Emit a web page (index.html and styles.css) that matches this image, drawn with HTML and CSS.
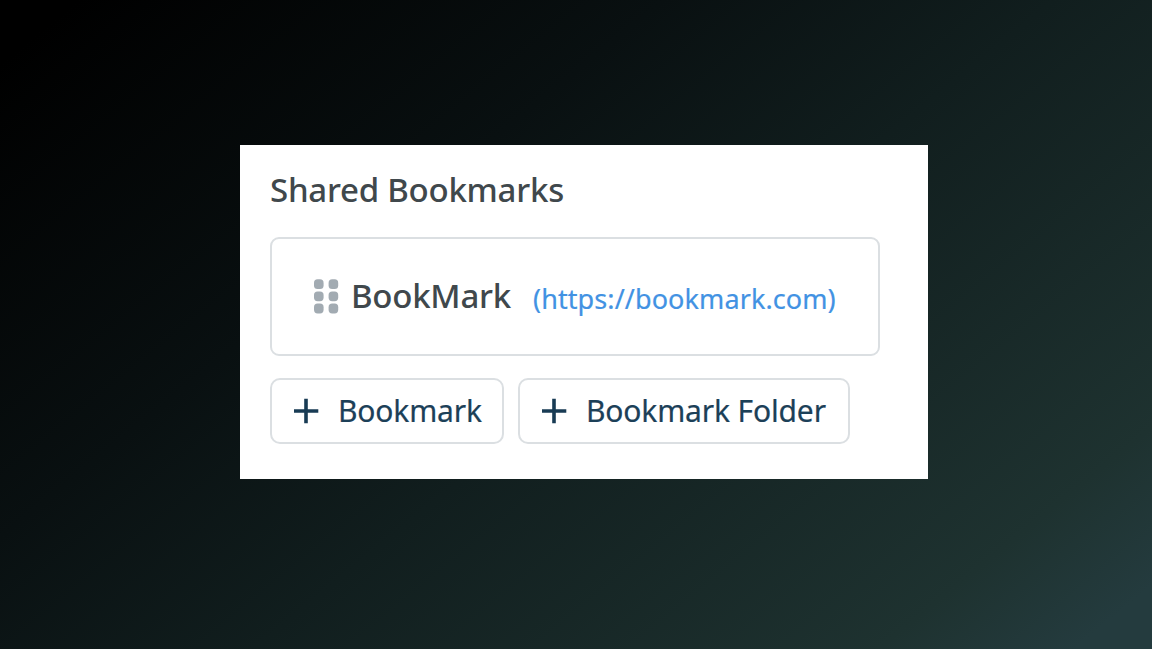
FILE: index.html
```html
<!DOCTYPE html>
<html lang="en">
<head>
<meta charset="utf-8">
<title>Shared Bookmarks</title>
<link rel="stylesheet" href="styles.css">
</head>
<body>
<main class="panel">
  <h1 class="title">Shared Bookmarks</h1>
  <div class="item">
    <svg class="grip" viewBox="0 0 25 36" aria-hidden="true">
      <rect x="0" y="0.3" width="9.6" height="9.8" rx="3.6"/><rect x="14.6" y="0.3" width="9.6" height="9.8" rx="3.6"/>
      <rect x="0" y="12.4" width="9.6" height="9.8" rx="3.6"/><rect x="14.6" y="12.4" width="9.6" height="9.8" rx="3.6"/>
      <rect x="0" y="24.6" width="9.6" height="9.8" rx="3.6"/><rect x="14.6" y="24.6" width="9.6" height="9.8" rx="3.6"/>
    </svg>
    <span class="name">BookMark</span>
    <a class="url">(https://bookmark.com)</a>
  </div>
  <div class="actions">
    <button class="button"><svg class="plus" viewBox="0 0 25 26" aria-hidden="true"><path d="M0 13H24.3M12 0.7V25.3"/></svg><span class="label">Bookmark</span></button>
    <button class="button"><svg class="plus" viewBox="0 0 25 26" aria-hidden="true"><path d="M0 13H24.3M12 0.7V25.3"/></svg><span class="label">Bookmark Folder</span></button>
  </div>
</main>
</body>
</html>
```
FILE: styles.css
```css
* { box-sizing: border-box; }
body {
  margin: 0;
  height: 649px;
  padding: 145px 224px 170px 240px;
  overflow: hidden;
  background: linear-gradient(141deg, #000 4%, #091011 34%, #111e1e 54%, #1e3230 86%, #243b3e 96%);
  font-family: "Noto Sans", "Open Sans", sans-serif;
}
.panel { height: 334px; padding: 22px 48px 0 30px; background: #fff; }
.title {
  margin: 0 0 24px;
  font-size: 33px;
  line-height: 46px;
  font-weight: 500;
  letter-spacing: -0.25px;
  color: #40484c;
  white-space: nowrap;
}
.item {
  display: flex;
  align-items: center;
  width: 610px;
  height: 119px;
  padding-left: 42px;
  border: 2px solid #dbdfe2;
  border-radius: 9px;
  white-space: nowrap;
}
.grip { width: 25px; height: 36px; margin-right: 12px; fill: #a2abb2; }
.name {
  margin-right: 22px;
  padding-bottom: 2px;
  font-size: 33px;
  font-weight: 500;
  letter-spacing: -0.25px;
  color: #40484c;
}
.url { padding-top: 3px; font-size: 27px; letter-spacing: 0.1px; color: #4292e3; -webkit-text-stroke: 0.2px #4292e3; }
.actions { display: flex; gap: 14px; margin-top: 22px; }
.button {
  display: flex;
  align-items: center;
  width: 234px;
  height: 66px;
  padding: 0 0 0 22px;
  border: 2px solid #dbdfe2;
  border-radius: 10px;
  background: #fff;
  color: #1c4058;
  font: 400 30px "Noto Sans", "Open Sans", sans-serif;
  letter-spacing: -0.15px;
  white-space: nowrap;
}
.button + .button { width: 332px; }
.label { padding-bottom: 1px; -webkit-text-stroke: 0.2px #1c4058; }
.plus { width: 25px; height: 26px; margin-right: 19px; fill: none; stroke: #183b54; stroke-width: 3.6; }
```
